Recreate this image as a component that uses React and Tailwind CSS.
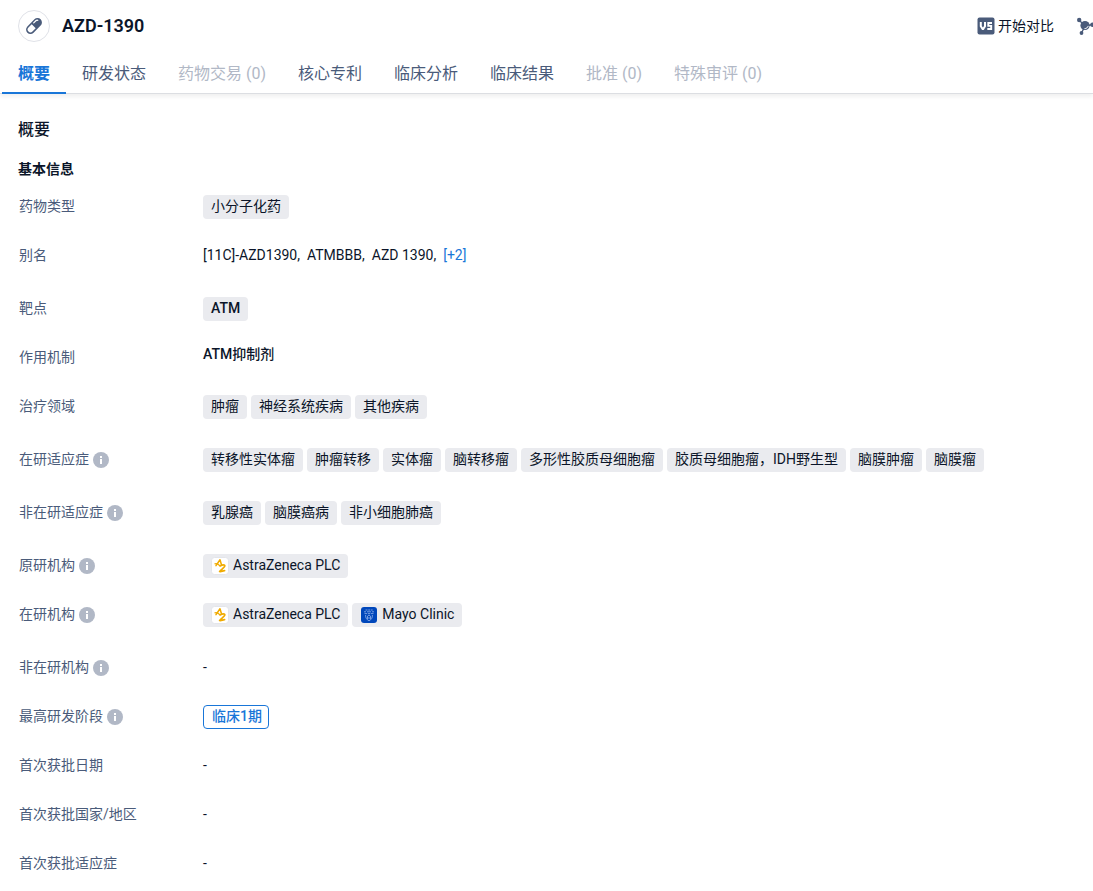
const tabs = [
  { label: '概要', active: true },
  { label: '研发状态' },
  { label: '药物交易 (0)', disabled: true },
  { label: '核心专利' },
  { label: '临床分析' },
  { label: '临床结果' },
  { label: '批准 (0)', disabled: true },
  { label: '特殊审评 (0)', disabled: true },
];

function PillIcon() {
  return (
    <svg viewBox="0 0 20 20" className="w-5 h-5" aria-hidden="true">
      <g transform="rotate(-45 10 10)">
        <rect x="0.6" y="5.6" width="18.8" height="8.800" rx="4.400" fill="#4a5b7a" />
        <path d="M9.600 7.200H5a2.800 2.800 0 0 0 0 5.600h4.600z" fill="#fff" />
        <path d="M12 7.600h3a2 2 0 0 1 1.700 1" fill="none" stroke="#fff" strokeWidth="1.300" strokeLinecap="round" />
      </g>
    </svg>
  );
}

function VsIcon() {
  return (
    <svg viewBox="0 0 18 18" className="w-[18px] h-[18px]" aria-hidden="true">
      <rect x="0.5" y="0.5" width="17" height="17" rx="2" fill="#4a5b7a" />
      <path d="M3.800 5v4.200L5.600 12h.6L8 9.200V5" fill="none" stroke="#fff" strokeWidth="2" />
      <path d="M15 6h-3.700v2.900h2.900V12H10.300" fill="none" stroke="#fff" strokeWidth="1.900" />
    </svg>
  );
}

function MoleculeIcon() {
  return (
    <svg viewBox="0 0 20 20" className="w-5 h-5 shrink-0" aria-hidden="true">
      <g stroke="#4a5b7a" strokeWidth="1.4">
        <path d="M3 4l6 6M9 10l-3.500 7M9 10l8-1.500" />
      </g>
      <g fill="#4a5b7a">
        <circle cx="3.200" cy="4" r="2.200" />
        <circle cx="9" cy="9.500" r="4.600" />
        <circle cx="5.500" cy="17" r="1.900" />
        <circle cx="16.500" cy="8.800" r="2.300" />
      </g>
      <path d="M8.500 12.600c2 0 3.300-1 3.700-2.700" fill="none" stroke="#fff" strokeWidth="1" />
    </svg>
  );
}

function InfoIcon() {
  return (
    <svg viewBox="0 0 16 16" className="w-4 h-4" aria-hidden="true">
      <circle cx="8" cy="8" r="8" fill="#b1b8c6" />
      <rect x="7" y="4" width="2" height="2" fill="#fff" />
      <rect x="7" y="7" width="2" height="5" fill="#fff" />
    </svg>
  );
}

function AstraLogo() {
  return (
    <svg viewBox="0 0 18 18" className="w-[18px] h-[18px]" aria-hidden="true">
      <rect x="0.5" y="0.5" width="17" height="17" rx="3" fill="#fff" stroke="#e3e5ea" />
      <g fill="none" stroke="#f0ab00" strokeLinecap="round" strokeLinejoin="round">
        <path d="M5 8.600L9 2.800l1.600 5.400" strokeWidth="1.500" />
        <path d="M4 6.800c1.600-.6 3.600.4 5 2.200" strokeWidth="1.300" />
        <path d="M9.500 8.800c1.700-.9 3.700-1 4.300-.2.600 1-2.800 3.200-5.200 5.900 1.700.5 3.400-.9 5-.8" strokeWidth="1.700" />
      </g>
    </svg>
  );
}

function MayoLogo() {
  return (
    <svg viewBox="0 0 18 18" className="w-[18px] h-[18px]" aria-hidden="true">
      <rect x="1" y="1" width="16" height="16" rx="3" fill="#0047bb" />
      <g fill="none" stroke="#a9c3f2" strokeWidth="0.700">
        <path d="M5.500 4h2M8.200 4h1.800M10.700 4h2M4 5.800h2M7 5.800h4M12 5.800h2M4.500 7.600h2.500M7.800 7.600h2.500M11 7.600h2.500" />
        <path d="M5.600 9c-.2 2.400.8 4.600 3.400 5.800 2.600-1.200 3.600-3.400 3.400-5.800" />
        <path d="M7.500 13v-2.800L9 9l1.500 1.200V13M9 11v2" />
      </g>
    </svg>
  );
}

function Tag({ children, icon, medium }) {
  return (
    <span
      className={`flex items-start h-6 px-2 rounded bg-[#eaebef] leading-[22px] whitespace-nowrap ${medium ? 'font-medium' : ''}`}
    >
      {icon && <span className="mt-[3px] mr-1">{icon}</span>}
      {children}
    </span>
  );
}

function TagList({ children }) {
  return <div className="flex flex-wrap gap-1">{children}</div>;
}

function Tags({ items }) {
  return (
    <TagList>
      {items.map((item) => (
        <Tag key={item}>{item}</Tag>
      ))}
    </TagList>
  );
}

function Row({ label, info, tall, children }) {
  return (
    <div className={`flex items-start ${tall ? 'pb-[29px]' : 'pb-[25px]'}`}>
      <dt className="w-[184px] h-6 shrink-0 flex items-start leading-[22px] text-[#4a5b7a]">
        {label}
        {info && (
          <button type="button" aria-label={`${label}说明`} className="ml-1 mt-1">
            <InfoIcon />
          </button>
        )}
      </dt>
      <dd className="flex-1 min-w-0 min-h-6 leading-[22px]">{children}</dd>
    </div>
  );
}

function Header() {
  return (
    <header className="flex items-center h-[52px] pl-[18px] overflow-hidden">
      <span className="w-8 h-8 shrink-0 rounded-full border border-[#e0e2e8] flex items-center justify-center">
        <PillIcon />
      </span>
      <h1 className="ml-3 text-lg font-semibold">AZD-1390</h1>
      <div className="ml-auto -mr-[3px] flex items-center gap-[22px] shrink-0">
        <button type="button" className="flex items-center gap-[3px] leading-5 pb-px">
          <VsIcon />
          开始对比
        </button>
        <button type="button" aria-label="分子结构">
          <MoleculeIcon />
        </button>
      </div>
    </header>
  );
}

function TabBar() {
  return (
    <nav className="flex h-[42px] pl-0.5 text-base border-b border-[#dcdee2] shadow-[0_3px_4px_rgba(0,0,0,0.06)]">
      {tabs.map((tab) => (
        <button
          key={tab.label}
          type="button"
          disabled={tab.disabled}
          className={`h-[42px] px-4 pt-[3px] border-b-2 whitespace-nowrap ${
            tab.active
              ? 'border-[#1976d8] text-[#1976d8] font-semibold'
              : tab.disabled
                ? 'border-transparent text-[#b1b8c6]'
                : 'border-transparent text-[#4a5b7a]'
          }`}
        >
          {tab.label}
        </button>
      ))}
    </nav>
  );
}

export default function App() {
  return (
    <div className="bg-white text-sm text-[#0b1529] font-[Roboto,'Noto_Sans_CJK_SC',sans-serif]">
      <Header />
      <TabBar />
      <main className="px-[18px] pt-6">
        <h2 className="text-base font-medium leading-6">概要</h2>
        <h3 className="mt-4 text-sm font-semibold leading-[22px]">基本信息</h3>
        <dl className="mt-[15px] pl-px">
          <Row label="药物类型">
            <Tags items={['小分子化药']} />
          </Row>
          <Row label="别名" tall>
            <span className="mr-[7px]">[11C]-AZD1390,</span>
            <span className="mr-[7px]">ATMBBB,</span>
            <span className="mr-[7px]">AZD 1390,</span>
            <button type="button" className="text-[#1976d8]">[+2]</button>
          </Row>
          <Row label="靶点">
            <TagList>
              <Tag medium>ATM</Tag>
            </TagList>
          </Row>
          <Row label="作用机制">
            <div className="font-medium leading-4">ATM抑制剂</div>
          </Row>
          <Row label="治疗领域" tall>
            <Tags items={['肿瘤', '神经系统疾病', '其他疾病']} />
          </Row>
          <Row label="在研适应症" info tall>
            <Tags
              items={['转移性实体瘤', '肿瘤转移', '实体瘤', '脑转移瘤', '多形性胶质母细胞瘤', '胶质母细胞瘤，IDH野生型', '脑膜肿瘤', '脑膜瘤']}
            />
          </Row>
          <Row label="非在研适应症" info tall>
            <Tags items={['乳腺癌', '脑膜癌病', '非小细胞肺癌']} />
          </Row>
          <Row label="原研机构" info>
            <TagList>
              <Tag icon={<AstraLogo />}>AstraZeneca PLC</Tag>
            </TagList>
          </Row>
          <Row label="在研机构" info tall>
            <TagList>
              <Tag icon={<AstraLogo />}>AstraZeneca PLC</Tag>
              <Tag icon={<MayoLogo />}>Mayo Clinic</Tag>
            </TagList>
          </Row>
          <Row label="非在研机构" info>-</Row>
          <Row label="最高研发阶段" info>
            <div className="w-fit h-6 pl-2 pr-1.5 rounded border border-[#1976d8] text-[#1976d8] font-medium leading-[21px]">
              临床1期
            </div>
          </Row>
          <Row label="首次获批日期">-</Row>
          <Row label="首次获批国家/地区">-</Row>
          <Row label="首次获批适应症">-</Row>
        </dl>
      </main>
    </div>
  );
}
